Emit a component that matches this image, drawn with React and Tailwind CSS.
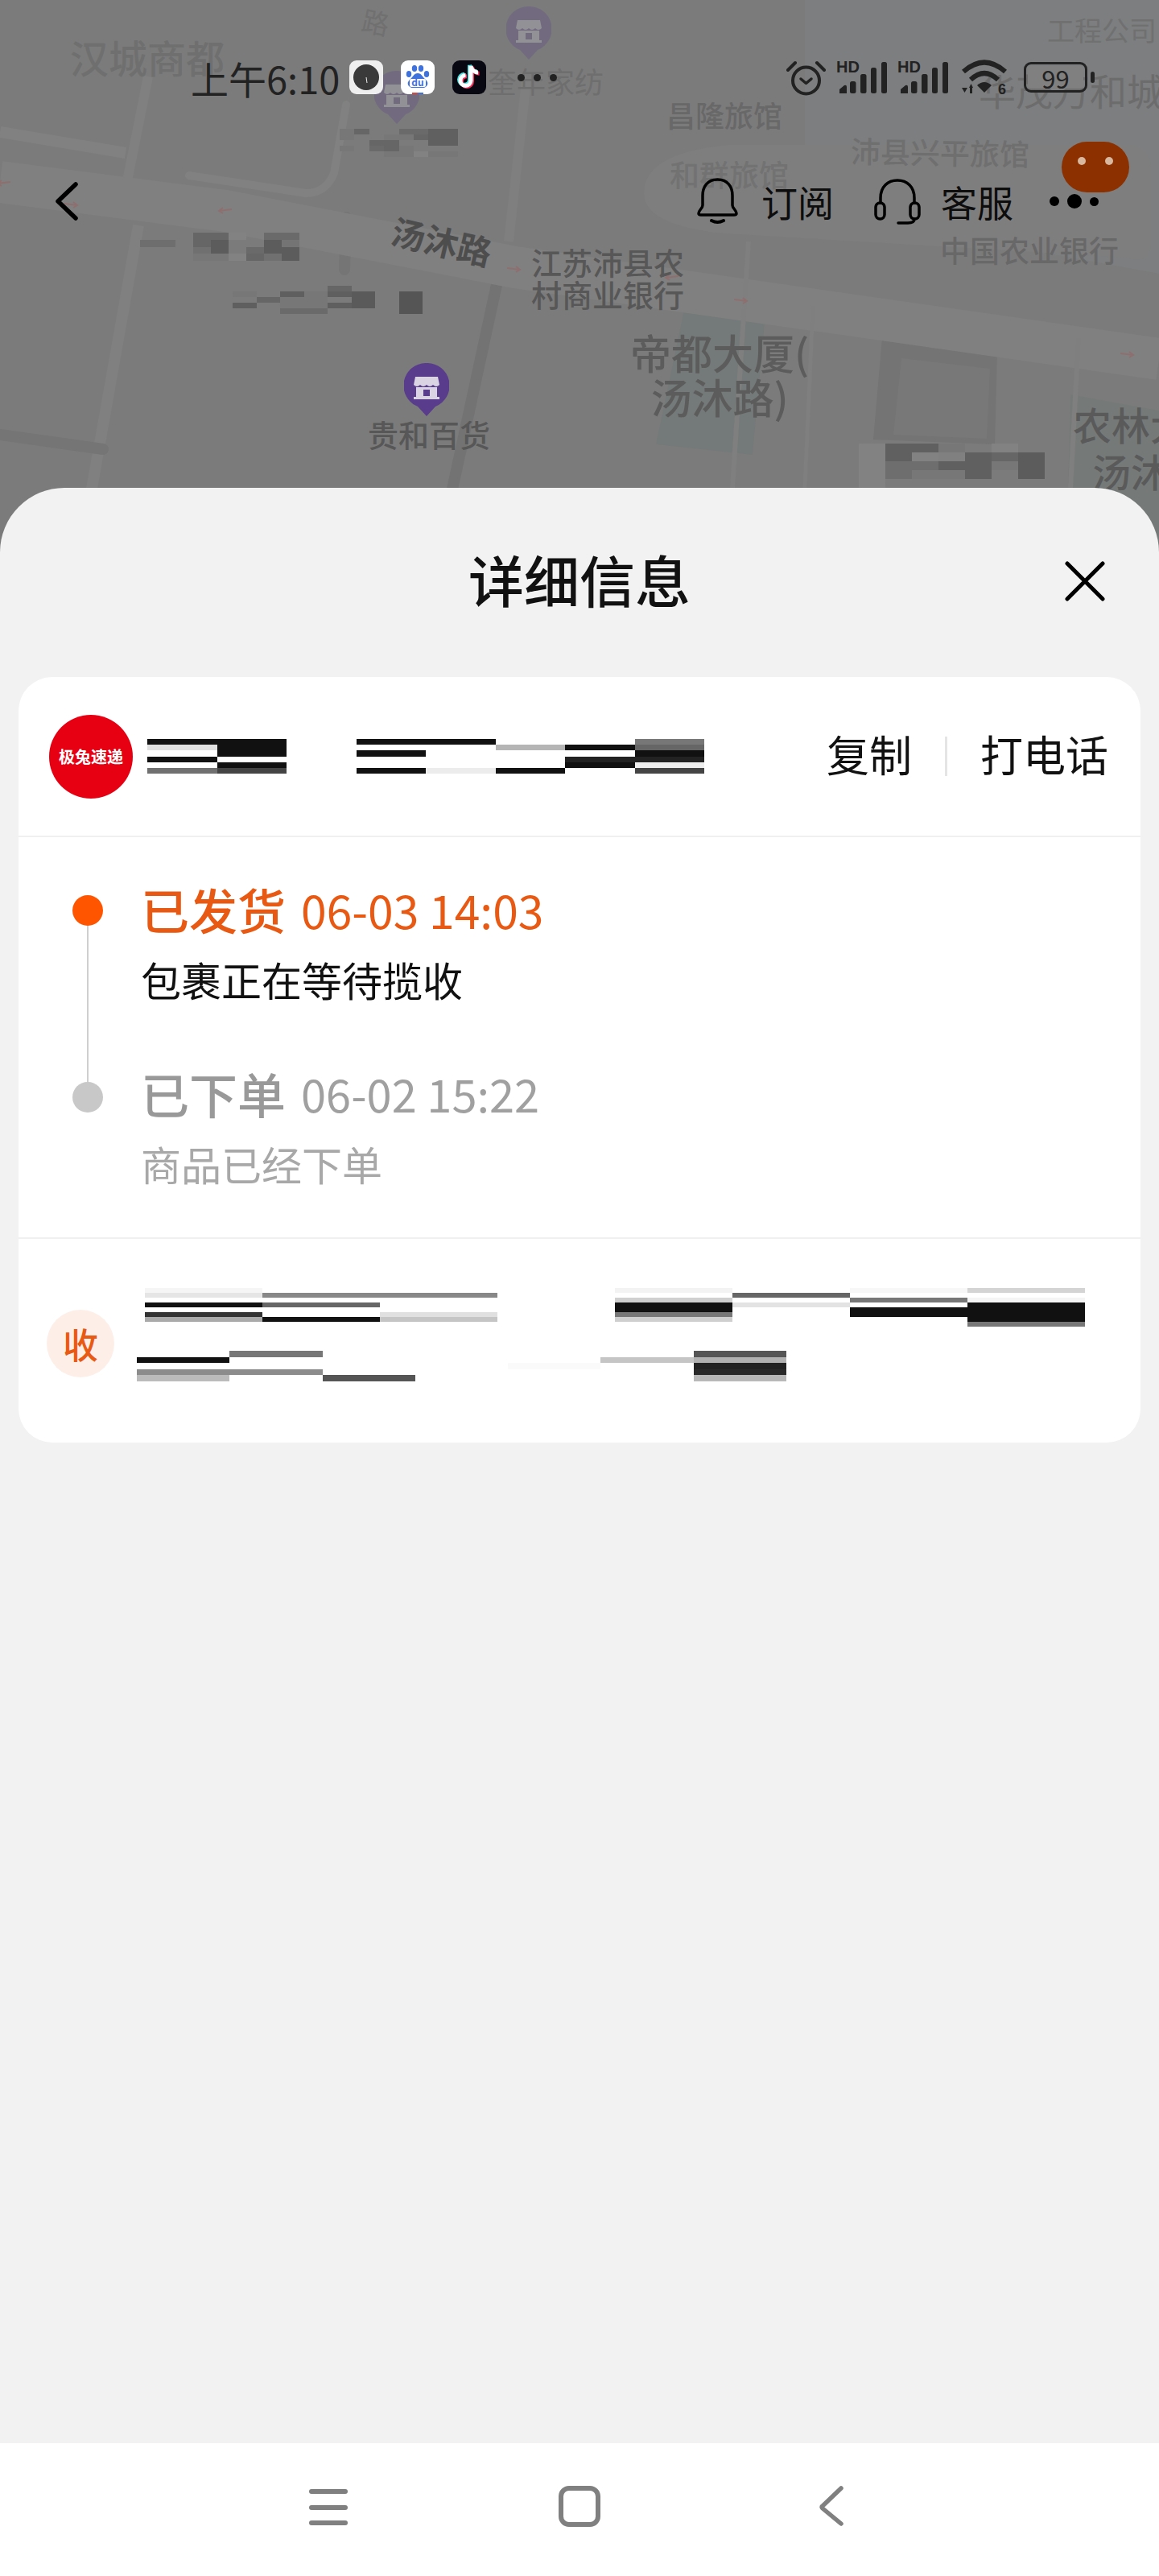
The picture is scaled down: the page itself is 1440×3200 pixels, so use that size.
import React from "react";

const W = "#ffffff";
const T = "transparent";

// blurred-out text blocks from the screenshot, one array per column
const carrierName = [
  ["#111", "#e0e0e0", W, "#111", W, "#707070"],
  ["#111", "#111", "#111", W, "#111", "#444"],
];
const trackingNo = [
  ["#111", W, "#111", W, W, "#111"],
  ["#111", W, W, W, W, "#ececec"],
  [W, "#b5b5b5", W, W, W, "#111"],
  [W, "#111", W, "#222", "#111", W],
  ["#777", "#666", "#111", "#222", "#eee", "#444"],
];
const addressOne = [
  ["#f5f5f5", "#e5e5e5", W, "#111", W, "#333", "#aaa", W],
  [W, "#888", W, "#666", W, W, "#111", W],
  [W, "#888", W, W, W, "#e0e0e0", "#c5c5c5", W],
  [W, W, W, W, W, W, W, W],
  ["#f3f3f3", W, "#d0d0d0", "#111", "#111", "#777", "#cfcfcf", W],
  [W, "#666", W, "#e3e3e3", W, W, W, W],
  ["#f7f7f7", W, "#777", W, "#111", "#111", W, W],
  ["#d4d4d4", W, "#f5f5f5", "#111", "#111", "#111", "#111", "#777"],
];
const addressTwo = [
  [W, "#111", W, "#8c8c8c", "#bbb"],
  ["#777", W, W, "#8c8c8c", W],
  [W, W, W, W, "#555"],
  [W, W, W, W, W],
  [W, W, "#fafafa", W, W],
  [W, "#c5c5c5", W, W, W],
  ["#555", "#b0b0b0", "#222", "#2a2a2a", "#b8b8b8"],
];

const mapBlockA = [
  [T, "#6e6e6e", T, T],
  [T, "#6e6e6e", T, T],
  [T, T, T, T],
  ["#666", "#666", "#707070", "#777"],
  ["#666", "#5c5c5c", "#5c5c5c", "#777"],
  ["#828282", T, T, "#828282"],
  [T, T, "#6a6a6a", "#666"],
  ["#6a6a6a", "#5c5c5c", "#5c5c5c", "#707070"],
  ["#6a6a6a", "#747474", "#5c5c5c", "#5c5c5c"],
];
const mapBlockB = [
  [T, "#777", T, "#5f5f5f", T],
  [T, T, "#666", T, T],
  [T, "#5f5f5f", "#777", "#777", "#6a6a6a"],
  [T, "#777", "#777", "#777", "#6a6a6a"],
  ["#666", "#5f5f5f", T, "#5f5f5f", T],
  [T, "#5a5a5a", "#5a5a5a", "#5a5a5a", T],
  [T, T, T, T, T],
  [T, "#555", "#555", "#555", "#555"],
];
const mapBlockC = [
  ["#777", "#777", T, "#777", T],
  ["#666", T, T, T, T],
  [T, T, "#666", "#6a6a6a", T],
  [T, "#777", "#666", "#666", "#777"],
  ["#6a6a6a", "#777", T, "#777", "#777"],
  ["#6a6a6a", "#666", T, T, "#828282"],
  ["#606060", "#606060", "#606060", T, "#777"],
  ["#606060", "#606060", "#606060", T, "#777"],
];
const mapBlockD = [
  ["#828282", "#828282", "#828282", "#828282", "#828282"],
  ["#606060", "#606060", "#6e6e6e", "#6e6e6e", T],
  ["#606060", "#828282", "#6e6e6e", "#777", T],
  ["#777", "#808080", "#606060", "#777", T],
  [T, "#606060", "#606060", "#606060", T],
  ["#828282", "#666", "#777", T, T],
  [T, "#5c5c5c", "#5c5c5c", "#5c5c5c", T],
];

function Mosaic({ cols, cell, row, className = "" }) {
  return (
    <div className={"flex shrink-0 " + className}>
      {cols.map((col, i) => (
        <div key={i} className="flex flex-col">
          {col.map((c, j) => (
            <div key={j} style={{ width: cell, height: row, background: c }} />
          ))}
        </div>
      ))}
    </div>
  );
}

function MapRoads() {
  return (
    <svg viewBox="0 0 1440 686" className="absolute inset-0 w-[1440px] h-[686px]">
      <path d="M1000 0 H1440 V340 L1000 260Z" fill="#7c7e7f" />
      <path d="M850 385 L950 400 L935 565 L815 552Z" fill="#747a79" />
      <path d="M1330 490 L1440 510 V686 H1325Z" fill="#757a79" />
      <path d="M1096 420 L1239 436 L1236 552 L1085 546Z" fill="#747474" />
      <path d="M1120 445 L1230 458 L1226 545 L1110 540Z" fill="#787878" />
      <path d="M905 180 H1400 Q1430 180 1430 210 V300 Q1430 330 1400 320 L900 290 Q800 280 800 240 Q800 190 905 180Z" fill="#7e7e7e" />
      <path d="M0 164 L156 190" stroke="#818181" strokeWidth="14" fill="none" />
      <path d="M184 95 L155 240" stroke="#808080" strokeWidth="12" fill="none" />
      <path d="M172 280 L100 686" stroke="#808080" strokeWidth="14" fill="none" />
      <path d="M235 218 L380 240 Q405 240 415 215 L430 130" stroke="#818181" strokeWidth="10" fill="none" strokeLinecap="round" />
      <path d="M430 270 L428 335" stroke="#757575" strokeWidth="14" fill="none" strokeLinecap="round" />
      <path d="M620 340 L545 686" stroke="#737373" strokeWidth="14" fill="none" />
      <path d="M654 100 L632 300" stroke="#7f7f7f" strokeWidth="12" fill="none" />
      <path d="M0 540 L128 558" stroke="#757575" strokeWidth="14" fill="none" strokeLinecap="round" />
      <path d="M0 226 L280 262 L640 332 L1440 446" stroke="#808080" strokeWidth="52" fill="none" />
      <path d="M930 300 L910 606" stroke="#7f7f7f" strokeWidth="6" fill="none" />
      <path d="M1010 380 L1000 606" stroke="#7f7f7f" strokeWidth="5" fill="none" />
      <path d="M1340 420 L1330 606" stroke="#7f7f7f" strokeWidth="6" fill="none" />
      {[[5, 227, -1], [88, 254, 1], [280, 261, -1], [638, 334, 1], [835, 344, -1], [920, 373, 1], [1400, 440, 1]].map(([x, y, d], i) => (
        <path key={i} d={`M${x - 8 * d} ${y - 1} L${x + 8 * d} ${y + 1} M${x + 3 * d} ${y - 3} L${x + 8 * d} ${y + 1} L${x + 3 * d} ${y + 4}`} stroke="#8e6f6f" strokeWidth="2" fill="none" />
      ))}
    </svg>
  );
}

function Pin({ className, faded }) {
  return (
    <svg viewBox="0 0 56 66" className={"absolute w-[56px] h-[66px] " + (faded ? "opacity-25 " : "") + className}>
      <path d="M28 0 A28 28 0 0 1 39 54 L28 66 L17 54 A28 28 0 0 1 28 0Z" fill="#5a3c8c" />
      <path d="M14 17 H42 L44 27 Q40 31 36 27 Q32 31 28 27 Q24 31 20 27 Q16 31 12 27Z" fill="#d9d3e3" />
      <path d="M15 30 H41 V42 H44 V45 H12 V42 H15Z" fill="#d9d3e3" />
      <rect x="24" y="33" width="8" height="8" fill="#5a3c8c" />
    </svg>
  );
}

function MapLayer() {
  return (
    <div className="absolute inset-0 overflow-hidden bg-[#7b7b7b]">
      <MapRoads />
      <Pin className="left-[629px] top-[8px]" faded />
      <Pin className="left-[465px] top-[88px]" faded />
      <Pin className="left-[502px] top-[451px]" />
      <span className="absolute left-[87px] top-[46px] text-[48px] leading-none text-[#6f6f6f] font-medium">汉城商都</span>
      <span className="absolute left-[450px] top-[10px] text-[34px] leading-none text-[#707070] rotate-[12deg]">路</span>
      <span className="absolute left-[606px] top-[82px] text-[36px] leading-none text-[#6e6e6e]">奎年家纺</span>
      <span className="absolute left-[1301px] top-[20px] text-[34px] leading-none whitespace-nowrap text-[#707070]">工程公司</span>
      <span className="absolute left-[1216px] top-[88px] text-[46px] leading-none whitespace-nowrap text-[#6c6c6c]">华茂万和城</span>
      <span className="absolute left-[828px] top-[124px] text-[36px] leading-none text-[#686868] font-medium">昌隆旅馆</span>
      <span className="absolute left-[1057px] top-[170px] text-[37px] leading-none text-[#6f6f6f] font-medium rotate-[1deg]">沛县兴平旅馆</span>
      <span className="absolute left-[832px] top-[198px] text-[37px] leading-none text-[#727272] font-medium">和群旅馆</span>
      <span className="absolute left-[1168px] top-[292px] text-[37px] leading-none text-[#686868] font-medium">中国农业银行</span>
      <span className="absolute left-[486px] top-[278px] text-[42px] leading-none whitespace-nowrap text-[#4d4d4d] font-bold rotate-[13deg]">汤沐路</span>
      <span className="absolute left-[660px] top-[305px] w-[190px] text-[38px] leading-[40px] text-[#575757] font-medium">江苏沛县农村商业银行</span>
      <span className="absolute left-[764px] top-[410px] w-[260px] text-center text-[51px] leading-[55px] text-[#5c5c5c] font-medium">帝都大厦(<br />汤沐路)</span>
      <span className="absolute left-[457px] top-[520px] text-[38px] leading-none text-[#575757] font-medium">贵和百货</span>
      <span className="absolute left-[1333px] top-[497px] w-[260px] text-left text-[48px] leading-[58px] text-[#5a5a5a] font-medium">农林大厦(<br /><span className="pl-[24px]">汤沐路)</span></span>
      <Mosaic cols={mapBlockC} cell={18.4} row={7} className="absolute left-[422px] top-[160px]" />
      <Mosaic cols={mapBlockA} cell={22} row={8.8} className="absolute left-[174px] top-[289px]" />
      <Mosaic cols={mapBlockB} cell={29.5} row={7} className="absolute left-[289px] top-[355px]" />
      <Mosaic cols={mapBlockD} cell={33} row={11} className="absolute left-[1067px] top-[551px]" />
    </div>
  );
}

function ClockApp() {
  return (
    <div className="w-[42px] h-[42px] rounded-[9px] bg-[#efefef] flex items-center justify-center">
      <svg viewBox="0 0 32 32" className="w-[32px] h-[32px]">
        <circle cx="16" cy="16" r="16" fill="#3a3a3a" />
        <path d="M16 16 L17 23" stroke="#eee" strokeWidth="1" />
      </svg>
    </div>
  );
}

function BaiduApp() {
  return (
    <svg viewBox="0 0 42 42" className="w-[42px] h-[42px] rounded-[9px] bg-white">
      <g fill="#3f72dc">
        <ellipse cx="10" cy="17" rx="3.2" ry="4" />
        <ellipse cx="17" cy="10" rx="3.2" ry="4" />
        <ellipse cx="25" cy="10" rx="3.2" ry="4" />
        <ellipse cx="32" cy="17" rx="3.2" ry="4" />
        <path d="M21 16 C26 16 27 21 31 24 C36 29 32 34 27 34 H15 C10 34 6 29 11 24 C15 21 16 16 21 16Z" />
      </g>
      <rect x="11" y="23" width="20" height="10" rx="2" fill="#fff" />
      <text x="21" y="32" textAnchor="middle" fontSize="12" fontWeight="700" fill="#3f72dc">du</text>
      <path d="M14 41 H21" stroke="#d8453c" strokeWidth="2" />
      <path d="M21 41 H28" stroke="#3f72dc" strokeWidth="2" />
    </svg>
  );
}

function TiktokApp() {
  const note = "M23 7 V25 A6.5 6.5 0 1 1 16.5 18.5 M23 7 C24 12 28 15 32 15";
  return (
    <svg viewBox="0 0 42 42" className="w-[42px] h-[42px] rounded-[9px] bg-[#080812]" fill="none" strokeWidth="5">
      <path d={note} stroke="#4fe3e3" transform="translate(-1.5 -1.2)" />
      <path d={note} stroke="#f0305a" transform="translate(1.5 1.2)" />
      <path d={note} stroke="#ffffff" />
    </svg>
  );
}

function AlarmIcon() {
  return (
    <svg viewBox="0 0 49 46" className="w-[49px] h-[46px]" fill="none" stroke="#222" strokeLinecap="round">
      <circle cx="24.5" cy="27" r="16.5" strokeWidth="4" />
      <path d="M18 25 L24.5 30.5 L31 25" strokeWidth="3.5" strokeLinejoin="round" />
      <path d="M2 14 L11 5 M47 14 L38 5" strokeWidth="4" />
    </svg>
  );
}

function SignalIcon() {
  return (
    <svg viewBox="0 0 63 42" className="w-[63px] h-[42px]" fill="#222">
      <text x="0" y="15" fontSize="20" fontWeight="700" fontFamily="Liberation Sans, sans-serif">HD</text>
      <path d="M4 41 V36 L10 31 Q13 30 13 33 V41Z" />
      <rect x="17" y="26" width="7.5" height="15" rx="2.5" />
      <rect x="30" y="17" width="7.5" height="24" rx="2.5" />
      <rect x="43" y="9" width="7" height="32" rx="2.5" />
      <rect x="56" y="2" width="7" height="39" rx="2.5" />
    </svg>
  );
}

function WifiIcon() {
  return (
    <svg viewBox="0 0 59 44" className="w-[59px] h-[44px]">
      <g fill="none" stroke="#222" strokeWidth="6">
        <path d="M3 15 Q29 -8 55 15" />
        <path d="M12 25 Q29 9 46 25" />
      </g>
      <path d="M20 32 Q29 24 38 32 L29 41Z" fill="#222" />
      <path d="M1 35 H8 L4.5 41Z" fill="#222" />
      <path d="M10 35 H15 L12.5 30Z" fill="#222" />
      <rect x="11" y="34" width="3" height="8" fill="#222" />
      <text x="46" y="43" fontSize="18" fontWeight="700" fill="#222" fontFamily="Liberation Sans, sans-serif">6</text>
    </svg>
  );
}

function BatteryIcon() {
  return (
    <div className="flex items-center gap-[4px]">
      <div className="w-[79px] h-[38px] rounded-[9px] border-[3.5px] border-[#222] p-[2px] flex">
        <div className="flex-1 rounded-[4px] bg-[#808080] flex items-center justify-center text-[31px] leading-none text-[#222]">99</div>
      </div>
      <div className="w-[5px] h-[14px] rounded-full bg-[#222]" />
    </div>
  );
}

function StatusBar() {
  return (
    <div className="flex items-center h-[46px] pl-[237px] pr-[80px]">
      <span className="w-[197px] text-[47px] leading-none text-[#222] whitespace-nowrap">上午6:10</span>
      <div className="flex items-center gap-[22px]">
        <ClockApp />
        <BaiduApp />
        <TiktokApp />
      </div>
      <div className="flex items-center gap-[11px] ml-[39px]">
        <div className="w-[9px] h-[9px] rounded-full bg-[#222]" />
        <div className="w-[9px] h-[9px] rounded-full bg-[#222]" />
        <div className="w-[9px] h-[9px] rounded-full bg-[#222]" />
      </div>
      <div className="ml-auto flex items-center gap-[13px]">
        <AlarmIcon />
        <SignalIcon />
        <SignalIcon />
        <div className="ml-[3px] mr-[6px]"><WifiIcon /></div>
        <BatteryIcon />
      </div>
    </div>
  );
}

function HeaderBar() {
  return (
    <div className="flex items-center h-[58px] pl-[69px] pr-[75px] mt-[102px]">
      <svg viewBox="0 0 28 48" className="w-[28px] h-[48px]" fill="none" stroke="#000" strokeWidth="5.5" strokeLinecap="round" strokeLinejoin="round">
        <path d="M25 3 L3 24 L25 45" />
      </svg>
      <div className="ml-auto flex items-center text-[45px] leading-none text-[#0d0d0d]">
        <svg viewBox="0 0 51 58" className="w-[51px] h-[58px]" fill="none" stroke="#000" strokeWidth="3.5" strokeLinecap="round" strokeLinejoin="round">
          <path d="M25.5 2 C13 2 7 11 7 22 V34 C7 38 2 40 2 44 C2 45.5 3 46 5 46 H46 C48 46 49 45.5 49 44 C49 40 44 38 44 34 V22 C44 11 38 2 25.5 2Z" />
          <path d="M18 53 Q25.5 57 33 53" strokeWidth="4" />
        </svg>
        <span className="ml-[29px]">订阅</span>
        <svg viewBox="0 0 58 58" className="ml-[50px] w-[58px] h-[58px]" fill="none" stroke="#000" strokeWidth="3.5" strokeLinecap="round">
          <path d="M8 31 V25 C8 11 17 3 29 3 C41 3 50 11 50 25 V31" />
          <rect x="2" y="31" width="11" height="20" rx="5.5" />
          <rect x="45" y="31" width="11" height="20" rx="5.5" />
          <path d="M50 51 C50 55 46 56 42 56 H30" />
        </svg>
        <span className="ml-[25px]">客服</span>
        <div className="ml-[45px] flex items-center gap-[10px]">
          <div className="w-[12px] h-[12px] rounded-full bg-black" />
          <div className="w-[18px] h-[18px] rounded-full bg-black" />
          <div className="w-[11px] h-[11px] rounded-full bg-black" />
        </div>
      </div>
    </div>
  );
}

function Timeline() {
  return (
    <div className="pt-[53px] pb-[57px] pl-[67px]">
      <div className="flex">
        <div className="w-[38px] flex flex-col items-center pt-[19px]">
          <div className="w-[38px] h-[38px] rounded-full bg-[#ff5500]" />
          <div className="w-[2px] flex-1 bg-[#cfcfcf]" />
        </div>
        <div className="ml-[47px] pb-[71px]">
          <div className="flex items-center h-[72px] text-[#e85a14] whitespace-nowrap">
            <span className="text-[60px] leading-none font-medium">已发货</span>
            <span className="ml-[19px] text-[57px] leading-none">06-03 14:03</span>
          </div>
          <div className="mt-[16px] h-[70px] flex items-center text-[50px] leading-none text-[#111]">包裹正在等待揽收</div>
        </div>
      </div>
      <div className="flex">
        <div className="w-[38px] flex flex-col items-center">
          <div className="w-[2px] h-[22px] bg-[#cfcfcf]" />
          <div className="w-[38px] h-[38px] rounded-full bg-[#c8c8c8]" />
        </div>
        <div className="ml-[47px]">
          <div className="flex items-center h-[72px] text-[#a0a0a0] whitespace-nowrap">
            <span className="text-[60px] leading-none font-medium text-[#999]">已下单</span>
            <span className="ml-[19px] text-[56px] leading-none">06-02 15:22</span>
          </div>
          <div className="mt-[16px] h-[70px] flex items-center text-[50px] leading-none text-[#a8a8a8]">商品已经下单</div>
        </div>
      </div>
    </div>
  );
}

function InfoCard() {
  return (
    <div className="mx-[23px] bg-white rounded-[42px] overflow-hidden">
      <div className="h-[197px] flex items-center pl-[38px] pr-[40px] border-b-2 border-[#f0f0f0] box-content">
        <div className="w-[104px] h-[104px] rounded-full bg-[#e60012] flex items-center justify-center text-[20px] font-bold text-white whitespace-nowrap">极兔速递</div>
        <Mosaic cols={carrierName} cell={86.5} row={7.2} className="ml-[18px]" />
        <Mosaic cols={trackingNo} cell={86.4} row={7.2} className="ml-[87px]" />
        <div className="ml-auto flex items-center text-[53px] leading-none text-[#111]">
          <span className="mb-[6px]">复制</span>
          <div className="w-[3px] h-[49px] bg-[#e5e5e5] mx-[41px]" />
          <span className="mb-[6px]">打电话</span>
        </div>
      </div>
      <div className="border-b-2 border-[#f0f0f0]">
        <Timeline />
      </div>
      <div className="h-[253px] flex items-start pl-[35px] pt-[61px]">
        <div className="mt-[27px] w-[84px] h-[84px] rounded-full bg-[#fdeee8] flex items-center justify-center text-[44px] font-medium leading-none text-[#e85a14]">收</div>
        <div className="ml-[28px] flex flex-col items-start">
          <Mosaic cols={addressOne} cell={146} row={6} className="ml-[10px]" />
          <Mosaic cols={addressTwo} cell={115.3} row={7.6} className="mt-[30px]" />
        </div>
      </div>
    </div>
  );
}

function NavBar() {
  return (
    <div className="h-[165px] bg-white flex items-start pt-[53px] pl-[384px]">
      <div className="w-[48px] h-[45px] mt-[4px] flex flex-col justify-between">
        <div className="h-[6px] rounded-full bg-[#808080]" />
        <div className="h-[6px] rounded-full bg-[#808080]" />
        <div className="h-[6px] rounded-full bg-[#808080]" />
      </div>
      <div className="ml-[262px] w-[52px] h-[51px] rounded-[13px] border-[6px] border-[#808080]" />
      <svg viewBox="0 0 31 50" className="ml-[271px] w-[31px] h-[50px]" fill="none" stroke="#808080" strokeWidth="5.5" strokeLinecap="round" strokeLinejoin="round">
        <path d="M28 3 L5 25 Q3 26 5 28 L28 47" />
      </svg>
    </div>
  );
}

export default function App() {
  return (
    <div className="w-[1440px] h-[3200px] flex flex-col bg-[#f2f2f2] font-['Noto_Sans_CJK_SC','Liberation_Sans',sans-serif]">
      <div className="relative h-[686px] shrink-0">
        <MapLayer />
        <div className="relative pt-[73px]">
          <StatusBar />
          <HeaderBar />
        </div>
        <div className="absolute left-[1319px] top-[176px] w-[84px] h-[63px] rounded-[32px] bg-[#8c3000] flex items-start justify-center gap-[24px] pt-[19px]">
          <div className="w-[10px] h-[10px] rounded-full bg-[#d9b8a0]" />
          <div className="w-[10px] h-[10px] rounded-full bg-[#d9b8a0]" />
        </div>
      </div>
      <div className="relative -mt-[80px] flex-1 flex flex-col bg-[#f2f2f2] rounded-t-[80px] overflow-hidden">
        <div className="grid grid-cols-[1fr_auto_1fr] items-center h-[232px] mb-[3px] pr-[67px]">
          <div />
          <h1 className="pl-[67px] mb-[5px] text-[69px] leading-none font-medium text-[#111]">详细信息</h1>
          <svg viewBox="0 0 50 50" className="justify-self-end w-[50px] h-[50px]" fill="none" stroke="#000" strokeWidth="5" strokeLinecap="round">
            <path d="M3 3 L47 47 M47 3 L3 47" />
          </svg>
        </div>
        <InfoCard />
        <div className="flex-1" />
        <NavBar />
      </div>
    </div>
  );
}
